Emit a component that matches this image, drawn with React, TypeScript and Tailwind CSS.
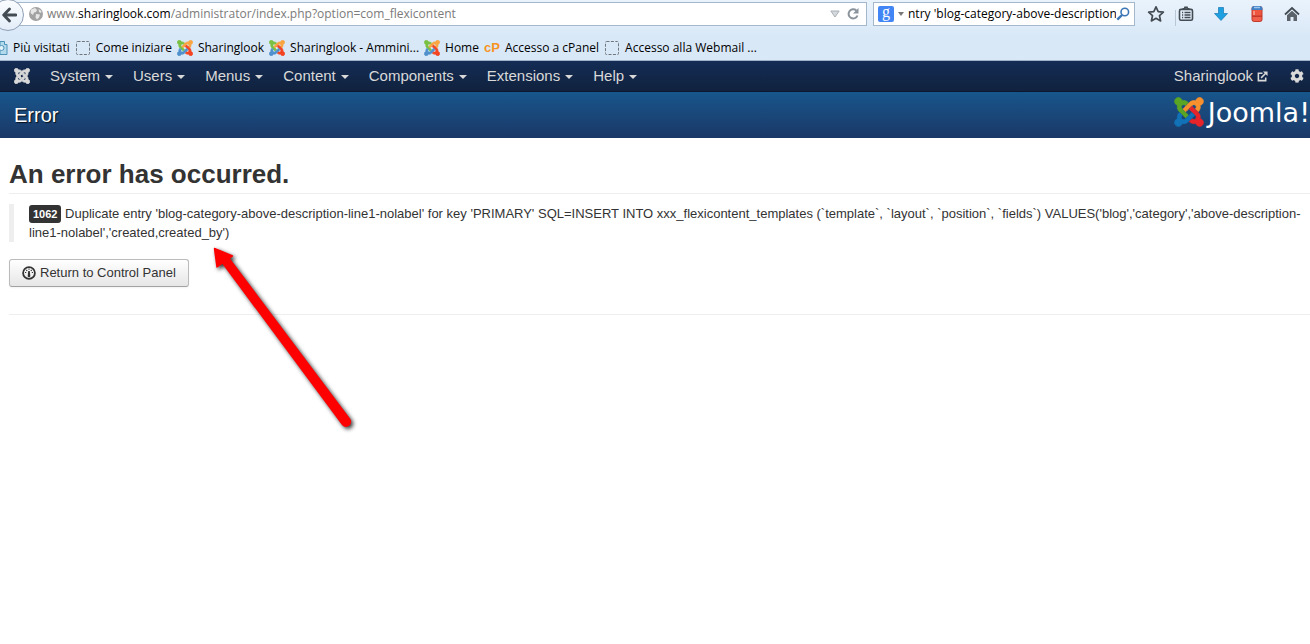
import { FaCog } from "react-icons/fa";

const menus = ["System", "Users", "Menus", "Content", "Components", "Extensions", "Help"];

const bookmarks = [
  { label: "Come iniziare", icon: "blank" },
  { label: "Sharinglook", icon: "joomla" },
  { label: "Sharinglook - Ammini...", icon: "joomla" },
  { label: "Home", icon: "joomla" },
  { label: "Accesso a cPanel", icon: "cpanel" },
  { label: "Accesso alla Webmail ...", icon: "blank" },
];

// one path per arm: top left, top right, bottom right, bottom left
const joomlaArms = [
  "M.6 92.1C.6 58.8 27.4 32 60.4 32c30 0 54.5 21.9 59.2 50.2 32.6-7.6 67.1.6 96.5 30l-44.3 44.3c-20.5-20.5-42.6-16.3-55.4-3.5-14.3 14.3-14.3 37.9 0 52.2l99.5 99.5-44 44.3c-87.7-87.2-49.7-49.7-99.8-99.7-26.8-26.5-35-64.8-24.8-98.9C20.4 144.6.6 120.7.6 92.1z",
  "M130.1 208.5l44.3 44.3c10-10 89.7-89.7 99.7-99.8 14.3-14.3 37.6-14.3 51.9 0 12.8 12.8 17 35-3.5 55.4l44 44.3c31.2-31.2 38.5-67.6 28.9-101.2 29.2-4.1 51.9-29.2 51.9-59.5 0-33.2-26.8-60.1-59.8-60.1-30.3 0-55.4 22.5-59.5 51.6-33.8-9.9-71.7-1.5-98.3 25.1-18.3 19.1-71.1 71.5-99.6 99.9z",
  "M396.4 360.7c8.2-32.7-.9-68.5-26.3-93.9-11.8-12.2 5 4.7-99.5-99.7l-44.3 44.3 99.7 99.7c14.3 14.3 14.3 37.6 0 51.9-12.8 12.8-35 17-55.4-3.5l-44 44.3c27.6 30.2 68 38.8 102.7 28 5.5 27.4 29.7 48.1 58.9 48.1 33 0 59.8-26.8 59.8-60.1 0-30.2-22.5-55-51.6-59.1z",
  "M312.1 307.6l-44-44.3c-87 86.4-50.4 50.4-99.7 99.8-14.3 14.3-37.6 14.3-51.9 0-13.1-13.4-16.9-35.3 3.2-55.4l-44-44.3c-30.2 30.2-38 65.2-29.5 98.3C19.5 367.7 0 391.6 0 419.9 0 453.2 26.8 480 59.8 480c28.6 0 52.5-19.8 58.6-46.7 32.7 8.2 68.5-.6 94.2-26 32.1-32 12.2-12.4 99.5-99.7z",
];

function JoomlaMark({ className, colors, weight = 0 }: { className: string; colors: string[]; weight?: number }) {
  return (
    <svg viewBox="-8 24 464 464" className={className} strokeWidth={weight} aria-hidden="true">
      {joomlaArms.map((d, i) => (
        <path key={i} d={d} fill={colors[i]} stroke={colors[i]} />
      ))}
    </svg>
  );
}

function BookmarkIcon({ icon }: { icon: string }) {
  if (icon === "joomla") {
    return <JoomlaMark className="size-4" weight={20} colors={["#7ac143", "#f9a541", "#f44321", "#5091cd"]} />;
  }
  if (icon === "cpanel") {
    return (
      <span className="w-4 text-center font-['Liberation_Sans'] text-[13px] leading-4 font-bold text-[#f7931e]">
        cP
      </span>
    );
  }
  return (
    <svg viewBox="0 0 16 16" className="size-4" aria-hidden="true">
      <rect x="1.5" y="1.5" width="13" height="13" rx="1" fill="none" stroke="#71767c" strokeDasharray="3 1.4" />
    </svg>
  );
}

function BrowserBar() {
  return (
    <div className="flex h-7 items-center gap-1.5">
      <div className="relative flex h-6 min-w-0 flex-1 items-center border border-l-0 border-[#a5b7cb] bg-white pr-1.5 pl-7">
        <button
          aria-label="Back"
          className="absolute -top-1 -left-2 flex size-8 items-center justify-center rounded-full border border-[#8e9fb5] bg-gradient-to-b from-[#fbfdff] to-[#e3edf8] pl-0.5"
        >
          <svg viewBox="0 0 16 16" className="size-4" fill="none" stroke="#434b53" strokeWidth="2.8">
            <path d="M8.5 2 2.7 8l5.8 6M3 8h12" strokeLinecap="round" strokeLinejoin="round" />
          </svg>
        </button>
        <svg viewBox="0 0 16 16" className="size-4 shrink-0" aria-hidden="true">
          <circle cx="8" cy="8" r="7" fill="#a2a2a2" />
          <path d="M3 3.5 7 2l2 2-1 2-2 .5L5 9 2.5 7zM8 8l4 .5-1 3-2 2-1.5-2zM10.5 3l3 2-.5 2-2-1z" fill="#e7e7e7" />
        </svg>
        <div className="flex min-w-0 flex-1 items-center pl-[3px]">
          <span className="text-[#7b7b7b]">www.</span>
          <span className="text-black">sharinglook.com</span>
          <input
            aria-label="Address"
            className="min-w-0 flex-1 bg-transparent text-[#7b7b7b] outline-none"
            defaultValue="/administrator/index.php?option=com_flexicontent"
          />
        </div>
        <button aria-label="Show history" className="mr-1.5">
          <svg viewBox="0 0 10 8" className="h-2 w-2.5">
            <path d="M.8 1h8.4L5 7z" fill="#d5d9dd" stroke="#a9afb6" />
          </svg>
        </button>
        <button aria-label="Reload">
          <svg viewBox="0 0 14 14" className="size-3.5" fill="none" stroke="#8b939c" strokeWidth="2">
            <path d="M10.3 3.5A4.6 4.6 0 1 0 11.5 8.5" />
            <path d="M12.5 1v5.5H7z" fill="#8b939c" stroke="none" />
          </svg>
        </button>
      </div>

      <div className="flex h-6 w-[262px] items-center border border-[#a5b7cb] bg-white px-1">
        <button aria-label="Search engine" className="mr-1 flex items-center gap-1">
          <span className="flex size-4 items-center justify-center rounded-xs bg-[#4285f4] pb-1 font-['Liberation_Serif'] text-base leading-4 text-white">
            g
          </span>
          <svg viewBox="0 0 6 4" className="h-1 w-1.5">
            <path d="M0 0h6L3 4z" fill="#777" />
          </svg>
        </button>
        <input
          aria-label="Search"
          className="min-w-0 flex-1 text-black outline-none"
          defaultValue="ntry 'blog-category-above-description"
        />
        <button aria-label="Go">
          <svg viewBox="0 0 14 14" className="size-3.5" fill="none" stroke="#3d76b5">
            <circle cx="8.8" cy="5" r="3.8" strokeWidth="1.6" />
            <path d="M6 8 1.3 12.7" strokeWidth="2.4" />
          </svg>
        </button>
      </div>

      <div className="flex items-center pr-2.5 pl-1.5">
        <button aria-label="Bookmark this page">
          <svg viewBox="0 0 18 18" className="size-[18px]" fill="none" stroke="#434b53" strokeWidth="1.7">
            <path
              d="m9 1.8 2.2 4.8 5.2.6-3.9 3.5 1.1 5.2L9 13.3l-4.6 2.6 1.1-5.2L1.6 7.2l5.2-.6z"
              strokeLinejoin="round"
            />
          </svg>
        </button>
        <span className="mt-2 ml-2.5 h-4 w-px bg-[#b9c6d4]" />
        <button aria-label="Bookmarks menu" className="ml-0.5">
          <svg viewBox="0 0 16 16" className="size-4" fill="none" stroke="#434b53" strokeWidth="1.6">
            <rect x="1.5" y="3.4" width="13" height="10.8" rx="1.5" />
            <path d="M4.5 3h2L7 1.500h2l.5 1.500h2" strokeWidth="1.8" />
            <path d="M4 6.500h1.200M6.500 6.500H12.500M4 9h1.200M6.500 9H12.500M4 11.500h1.200M6.500 11.500H12.500" strokeWidth="1.3" />
          </svg>
        </button>
        <button aria-label="Downloads" className="ml-5">
          <svg viewBox="0 0 14 14" className="size-3.5">
            <path d="M4.5.5h5v6h4L7 13.5.5 6.5h4z" fill="#1e9fe0" stroke="#1678b4" strokeWidth=".7" />
          </svg>
        </button>
        <button aria-label="Extension" className="ml-[22px]">
          <svg viewBox="0 0 14 18" className="h-[18px] w-3.5">
            <rect x="1.5" y="1" width="11" height="16" rx="3" fill="#c3392b" />
            <path d="M1.5 5V4a3 3 0 0 1 3-3h5a3 3 0 0 1 3 3v1z" fill="#3f7fc4" />
            <path d="M4 2.500h6" stroke="#9cc4ec" strokeWidth="1.5" />
            <path d="M2.500 5h9v5.500h-9z" fill="#ee5640" />
            <path d="M2.500 12h9v3l-1.500 1H4l-1.500-1z" fill="#f0604a" />
            <path d="M4 6v4" stroke="#fba794" strokeWidth="1.5" />
          </svg>
        </button>
        <button aria-label="Home page" className="ml-5">
          <svg viewBox="0 0 16 16" className="size-4">
            <path d="M1 8.5 8 2l7 6.500" fill="none" stroke="#434b53" strokeWidth="1.8" />
            <path d="M3 9.200 8 4.800l5 4.400V15H9.500v-4h-3v4H3z" fill="#5b6269" />
          </svg>
        </button>
      </div>
    </div>
  );
}

export default function App() {
  return (
    <div className="relative min-h-screen overflow-hidden bg-white font-['Liberation_Sans',sans-serif] text-[13px] text-[#333]">
      <header className="border-b border-[#9fb2ca] bg-gradient-to-b from-[#eaf3fc] to-[#d9e8f7] to-60% font-['Open_Sans','Noto_Sans',sans-serif] text-xs text-black">
        <BrowserBar />
        <nav aria-label="Bookmarks" className="flex h-8 items-center gap-[5px] pt-2 whitespace-nowrap">
          <a href="#" className="flex items-center gap-[5px]">
            <svg viewBox="0 0 8 16" className="h-4 w-2" aria-hidden="true">
              <path d="M0 1.5h4.5v3H7v10H0z" fill="#b3d9ec" stroke="#4d93b8" />
              <circle cx="1.5" cy="8" r="2.5" fill="#e5f3fa" stroke="#4d93b8" />
            </svg>
            Più visitati
          </a>
          {bookmarks.map((b) => (
            <a key={b.label} href="#" className="flex items-center gap-[5px]">
              <BookmarkIcon icon={b.icon} />
              {b.label}
            </a>
          ))}
        </nav>
      </header>

      <nav
        aria-label="Administrator"
        className="flex h-[31px] items-center border-b border-[#0c182e] bg-gradient-to-b from-[#142c55] to-[#10223e] text-[15px] text-[#d9d9d9]"
      >
        <a href="#" aria-label="Control panel" className="mr-2.5 ml-3.5">
          <JoomlaMark className="size-4" weight={24} colors={["#d9d9d9", "#d9d9d9", "#d9d9d9", "#d9d9d9"]} />
        </a>
        {menus.map((menu) => (
          <button key={menu} className="flex items-center gap-[5px] px-2.5">
            {menu}
            <span className="mt-0.5 border-x-4 border-t-4 border-x-transparent border-t-[#d9d9d9]" />
          </button>
        ))}
        <a href="#" className="ml-auto flex items-center gap-1">
          Sharinglook
          <svg viewBox="0 0 12 12" className="size-[11px]" fill="none" stroke="#d9d9d9" strokeWidth="1.7">
            <path d="M6 2.5H1.5v8h8V7M4.5 7.5 9.5 2.500" />
            <path d="M6.5.5h5v5z" fill="#d9d9d9" stroke="none" />
          </svg>
        </a>
        <button aria-label="Settings" className="mr-1.5 ml-[22px]">
          <FaCog className="size-3.5" />
        </button>
      </nav>

      <div className="flex h-[46px] items-center justify-between bg-gradient-to-b from-[#17568c] to-[#1a3867] text-white">
        <h1 className="pl-3.5 text-xl [text-shadow:1px_1px_1px_rgba(0,0,0,0.8)]">Error</h1>
        <div className="flex items-center gap-1 pb-1.5">
          <JoomlaMark className="size-[30px]" weight={10} colors={["#5ba525", "#f7902d", "#e8242b", "#1272b8"]} />
          <span className="pt-0.5 font-['DejaVu_Sans'] text-[27px] leading-8">Joomla!</span>
        </div>
      </div>

      <main className="pt-[21px] pl-[9px]">
        <h2 className="border-b border-[#eee] pb-1 text-[26px] leading-[30px] font-bold">An error has occurred.</h2>
        <blockquote className="mt-2.5 border-l-[5px] border-[#eee] pl-[15px] leading-[19px]">
          <p>
            <span className="rounded-[3px] bg-[#333] px-1 py-[3px] text-[11px] leading-none font-bold text-white">
              1062
            </span>{" "}
            Duplicate entry 'blog-category-above-description-line1-nolabel' for key 'PRIMARY' SQL=INSERT INTO
            xxx_flexicontent_templates (`template`, `layout`, `position`, `fields`)
            VALUES('blog','category','above-description-line1-nolabel','created,created_by')
          </p>
        </blockquote>
        <a
          href="#"
          className="mt-[17px] inline-flex h-7 items-center gap-1 rounded-[3px] border border-[#bbb] border-b-[#a2a2a2] bg-gradient-to-b from-white to-[#e6e6e6] px-3 shadow-xs"
        >
          <svg viewBox="0 0 14 14" className="size-3.5" aria-hidden="true">
            <circle cx="7" cy="7" r="5.9" fill="none" stroke="#333" strokeWidth="1.8" />
            <path d="M6.2 5h1.6l.5 5a1.3 1.3 0 0 1-2.6 0z" fill="#333" />
            <path d="M3 6.5h1.2M9.8 6.5H11M4.3 4l.9.9M9.7 4l-.9.9M7 2.6v1.2" stroke="#333" strokeWidth="1.1" />
          </svg>
          Return to Control Panel
        </a>
        <hr className="mt-[27px] border-[#eee]" />
      </main>

      <svg
        viewBox="0 0 150 190"
        className="pointer-events-none absolute top-[244px] left-[210px] h-[190px] w-[150px] drop-shadow-[2px_2px_2px_rgba(0,0,0,0.8)]"
        aria-hidden="true"
      >
        <path d="M4.5 4.5 22.500 12 7 23z" fill="#f00" stroke="#f00" strokeWidth="1.5" strokeLinejoin="round" />
        <path d="M11 18 18.5 12.5 140 174.5A5 5 0 0 1 132 181z" fill="#f00" />
      </svg>
    </div>
  );
}
